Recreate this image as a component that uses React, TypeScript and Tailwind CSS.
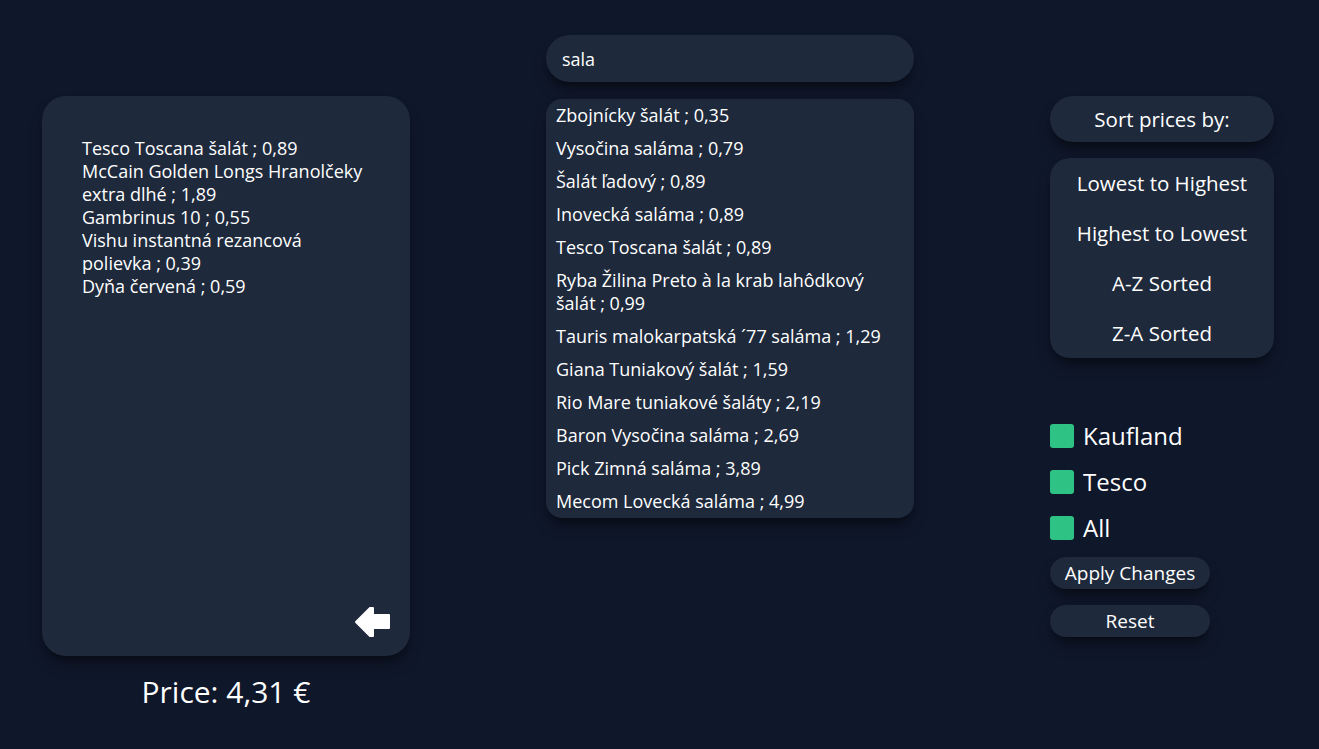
import React, { useState } from 'react';

const cart = [
  'Tesco Toscana šalát ; 0,89',
  'McCain Golden Longs Hranolčeky extra dlhé ; 1,89',
  'Gambrinus 10 ; 0,55',
  'Vishu instantná rezancová polievka ; 0,39',
  'Dyňa červená ; 0,59',
];

const results = [
  'Zbojnícky šalát ; 0,35',
  'Vysočina saláma ; 0,79',
  'Šalát ľadový ; 0,89',
  'Inovecká saláma ; 0,89',
  'Tesco Toscana šalát ; 0,89',
  'Ryba Žilina Preto à la krab lahôdkový šalát ; 0,99',
  'Tauris malokarpatská ´77 saláma ; 1,29',
  'Giana Tuniakový šalát ; 1,59',
  'Rio Mare tuniakové šaláty ; 2,19',
  'Baron Vysočina saláma ; 2,69',
  'Pick Zimná saláma ; 3,89',
  'Mecom Lovecká saláma ; 4,99',
];

const sorts = ['Lowest to Highest', 'Highest to Lowest', 'A-Z Sorted', 'Z-A Sorted'];
const shops = ['Kaufland', 'Tesco', 'All'];

function BackArrow() {
  return (
    <svg width="36" height="32" viewBox="0 0 36 32" fill="white">
      <path
        d="M2 16 L16 2 L19 2 L19 9 L35 9 L35 22 L19 22 L19 30 L16 30 Z"
        stroke="white"
        strokeWidth="2"
        strokeLinejoin="round"
      />
    </svg>
  );
}

export default function App() {
  const [query, setQuery] = useState('sala');

  return (
    <div
      className="min-h-screen w-full bg-[#0f172a] text-white flex items-start pl-[42px] gap-[136px]"
      style={{ fontFamily: '"Open Sans", "Noto Sans", sans-serif' }}
    >
      {/* Cart */}
      <div className="flex flex-col items-center mt-[96px] w-[368px]">
        <div className="w-full h-[560px] bg-[#1e293b] rounded-[24px] shadow-lg shadow-black/40 flex flex-col pl-[40px] pr-[38px] pt-[41px] pb-[18px]">
          <div className="text-[18px] leading-[23px]">
            {cart.map((item) => (
              <div key={item}>{item}</div>
            ))}
          </div>
          <button className="mt-auto self-end mr-[-18px]">
            <BackArrow />
          </button>
        </div>
        <div className="mt-[16px] text-[30px] leading-[40px]">Price: 4,31 €</div>
      </div>

      {/* Search */}
      <div className="flex flex-col mt-[35px] w-[368px]">
        <input
          value={query}
          onChange={(e) => setQuery(e.target.value)}
          className="h-[47px] w-full rounded-full bg-[#1e293b] px-4 text-[18px] text-white outline-none shadow-lg shadow-black/40"
        />
        <div className="mt-[17px] bg-[#1e293b] rounded-[16px] shadow-lg shadow-black/40">
          {results.map((item) => (
            <div key={item} className="px-[10px] py-[5px] text-[18px] leading-[23px]">
              {item}
            </div>
          ))}
        </div>
      </div>

      {/* Controls */}
      <div className="flex flex-col mt-[96px] w-[224px]">
        <div className="h-[46px] rounded-full bg-[#1e293b] flex items-center justify-center text-[20.5px] shadow-lg shadow-black/40">
          Sort prices by:
        </div>
        <div className="mt-[16px] bg-[#1e293b] rounded-[20px] shadow-lg shadow-black/40">
          {sorts.map((s) => (
            <div key={s} className="h-[50px] flex items-center justify-center text-[20.5px]">
              {s}
            </div>
          ))}
        </div>
        <div className="mt-[66px] flex flex-col gap-[22px]">
          {shops.map((s) => (
            <label key={s} className="flex items-center gap-[9px] h-[24px]">
              <span className="w-[24px] h-[24px] rounded-[3px] bg-[#2ec285]" />
              <span className="text-[24px] leading-[24px]">{s}</span>
            </label>
          ))}
        </div>
        <button className="mt-[17px] w-[160px] h-[32px] rounded-full bg-[#1e293b] text-[19px] shadow-lg shadow-black/40">
          Apply Changes
        </button>
        <button className="mt-[16px] w-[160px] h-[32px] rounded-full bg-[#1e293b] text-[19px] shadow-lg shadow-black/40">
          Reset
        </button>
      </div>
    </div>
  );
}
